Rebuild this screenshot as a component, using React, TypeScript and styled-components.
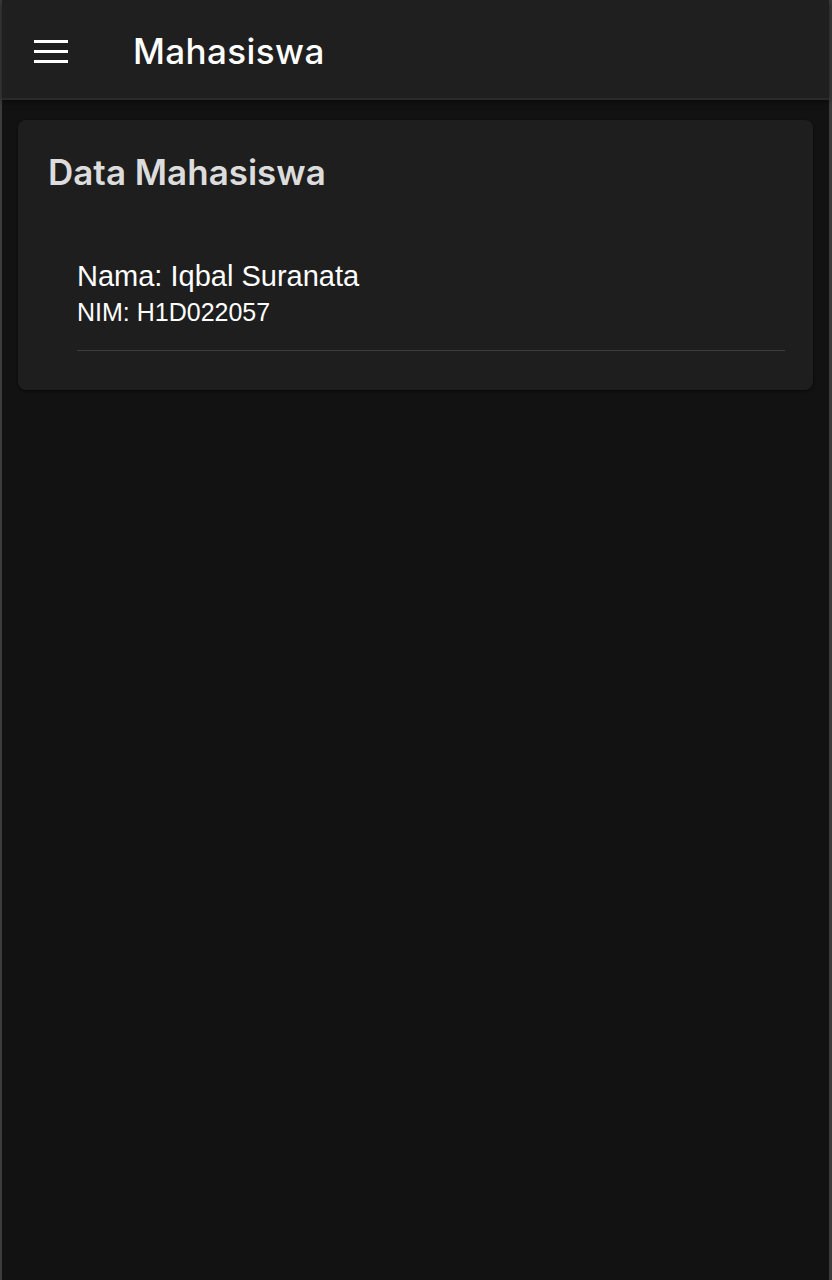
import styled, { createGlobalStyle } from "styled-components";

const GlobalStyle = createGlobalStyle`
  html, body {
    margin: 0;
    padding: 0;
    background: #121212;
    font-family: "Liberation Sans", Arial, sans-serif;
  }
`;

const StyledPage = styled.div`
  min-height: 1280px;
  box-sizing: border-box;
  background: #121212;
  border-left: 2px solid #3c3c3c;
  border-right: 3px solid #3c3c3c;
`;

const StyledToolbar = styled.header`
  height: 98px;
  display: flex;
  align-items: center;
  background: #1f1f1f;
  border-bottom: 2px solid #2a2a2a;
  box-shadow: 0 2px 6px rgba(0, 0, 0, 0.5);
`;

const StyledMenuButton = styled.button`
  width: 34px;
  height: 23px;
  margin: 4px 0 0 32px;
  padding: 0;
  border: none;
  background: transparent;
  display: flex;
  flex-direction: column;
  justify-content: space-between;
  cursor: pointer;

  span {
    display: block;
    height: 3px;
    background: #ffffff;
  }
`;

const StyledToolbarTitle = styled.h1`
  margin: 4px 0 0 65px;
  font-family: Inter, "Liberation Sans", sans-serif;
  font-size: 35px;
  font-weight: 500;
  letter-spacing: 0.4px;
  color: #ffffff;
`;

const StyledContent = styled.main`
  padding: 20px 16px 0 16px;
`;

const StyledCard = styled.section`
  background: #1e1e1e;
  border-radius: 8px;
  padding: 30px 28px 39px 30px;
  box-shadow: 0 1px 3px rgba(0, 0, 0, 0.6);
`;

const StyledCardTitle = styled.h2`
  margin: 0;
  font-family: Inter, "Liberation Sans", sans-serif;
  font-size: 35px;
  font-weight: 600;
  color: #dcdcdc;
  line-height: 44px;
`;

const StyledList = styled.ul`
  list-style: none;
  margin: 64px 0 0 0;
  padding: 0 0 0 29px;
`;

const StyledItem = styled.li`
  padding-bottom: 21px;
  border-bottom: 1px solid #3d3d3d;
`;

const StyledItemLine = styled.div<{ $size: number; $lh: number }>`
  font-size: ${(p) => p.$size}px;
  line-height: ${(p) => p.$lh}px;
  color: #ffffff;
`;

const students = [{ nama: "Iqbal Suranata", nim: "H1D022057" }];

export default function App() {
  return (
    <>
      <GlobalStyle />
      <StyledPage>
        <StyledToolbar>
          <StyledMenuButton aria-label="menu">
            <span />
            <span />
            <span />
          </StyledMenuButton>
          <StyledToolbarTitle>Mahasiswa</StyledToolbarTitle>
        </StyledToolbar>
        <StyledContent>
          <StyledCard>
            <StyledCardTitle>Data Mahasiswa</StyledCardTitle>
            <StyledList>
              {students.map((s) => (
                <StyledItem key={s.nim}>
                  <StyledItemLine $size={29} $lh={37}>
                    Nama: {s.nama}
                  </StyledItemLine>
                  <StyledItemLine $size={25} $lh={34}>
                    NIM: {s.nim}
                  </StyledItemLine>
                </StyledItem>
              ))}
            </StyledList>
          </StyledCard>
        </StyledContent>
      </StyledPage>
    </>
  );
}
